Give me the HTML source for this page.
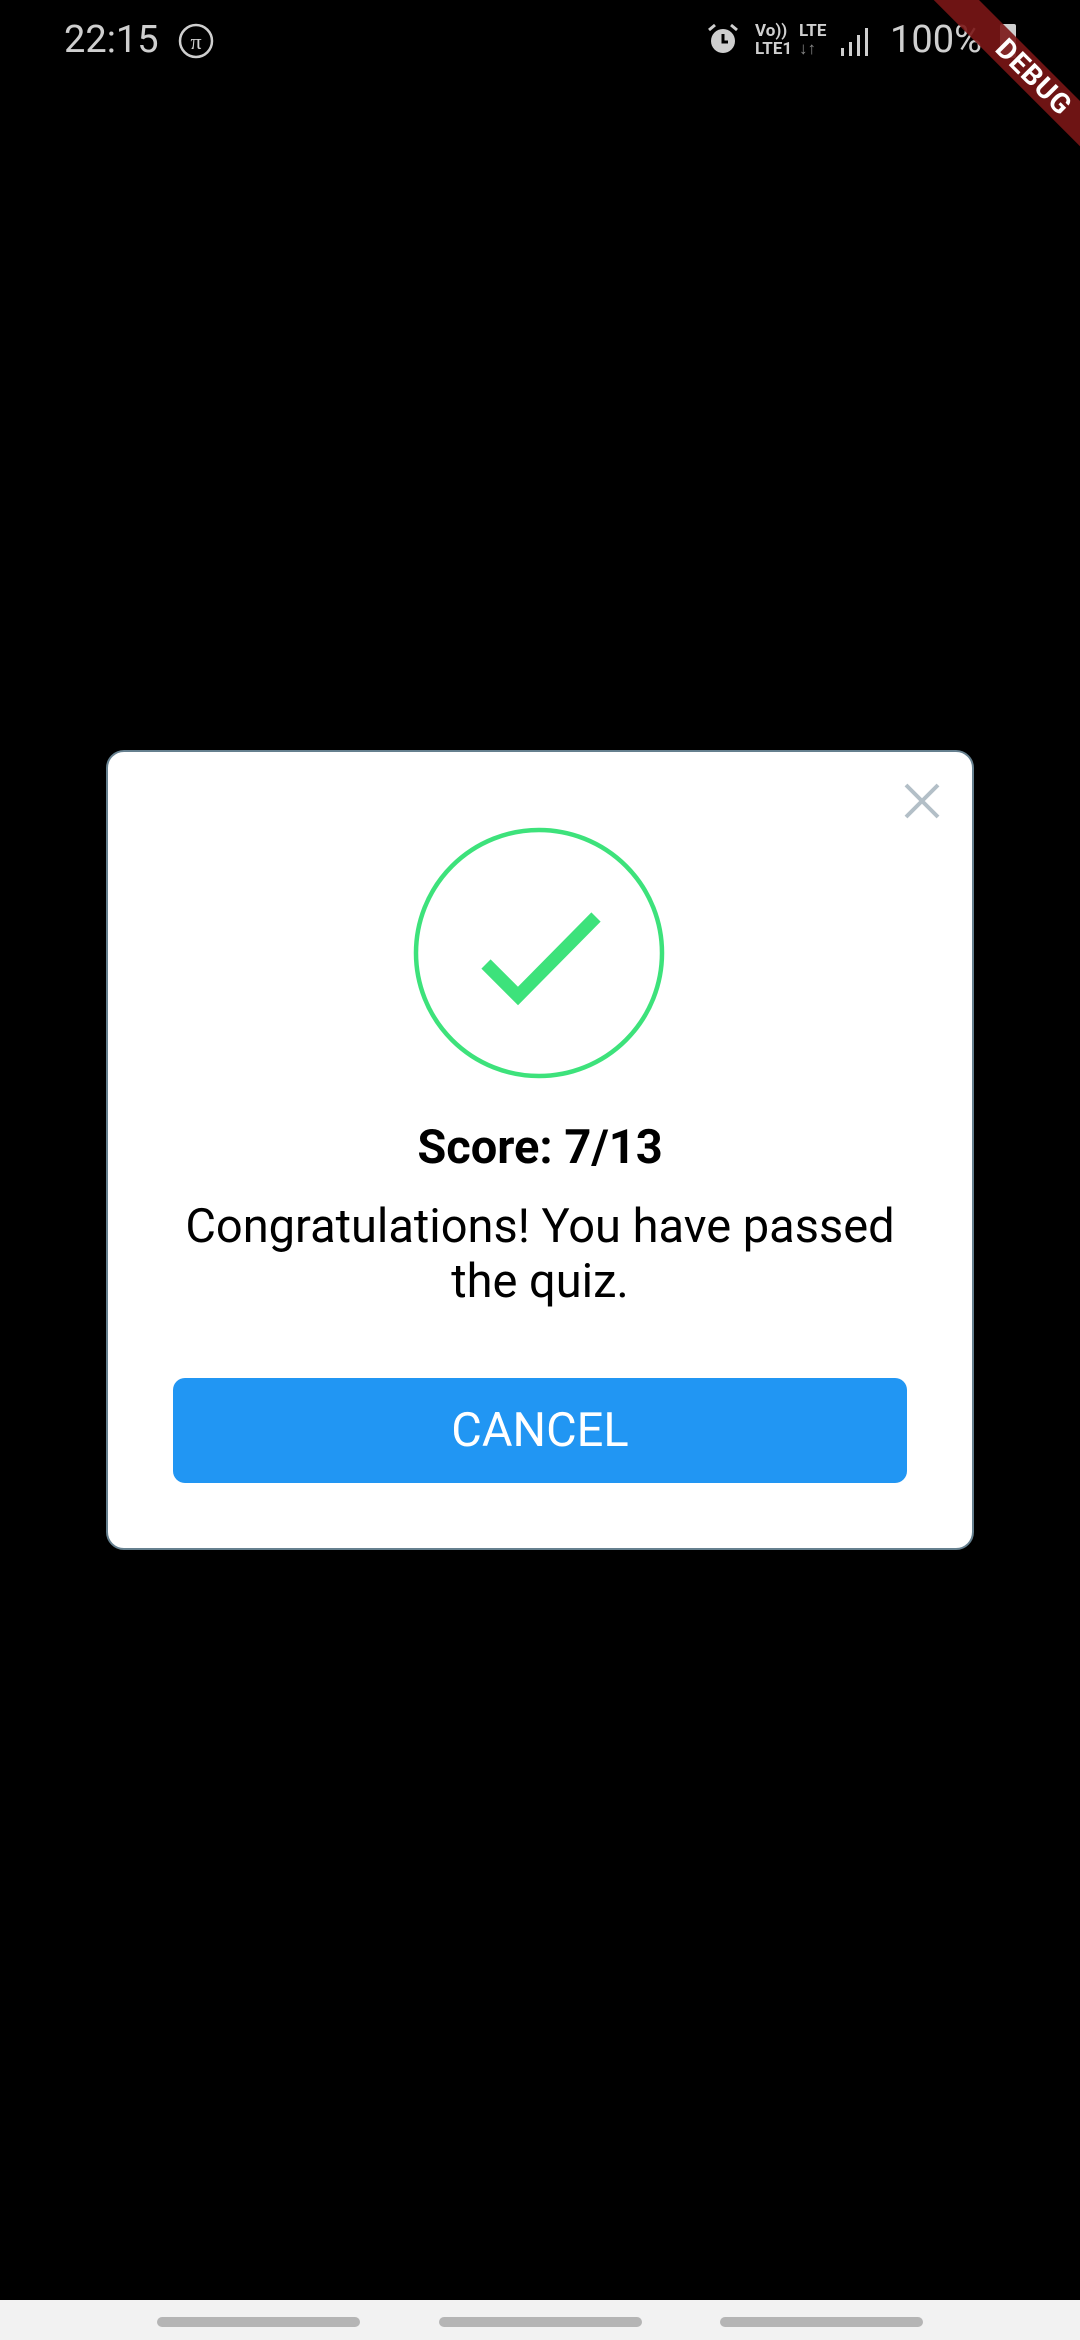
<!DOCTYPE html>
<html><head><meta charset="utf-8"><style>
html,body{margin:0;padding:0;background:#000;width:1080px;height:2340px;overflow:hidden;position:relative;font-family:"Roboto","Liberation Sans",sans-serif}
.abs{position:absolute}
.sb{color:#cfcfcf}
.dlg{left:106px;top:750px;width:864px;height:796px;background:#fff;border:2px solid #66808f;border-radius:18px}
.btn{left:173px;top:1378px;width:734px;height:105px;background:#2196F3;border-radius:12px;color:#fff;font-size:47px;text-align:center;line-height:105px}
.nav{left:0;top:2300px;width:1080px;height:40px;background:#f2f2f2}
.pill{top:2317px;width:203px;height:10px;border-radius:5px;background:#b5b5b5}
</style></head><body>
<div class="abs sb" style="left:64px;top:18px;font-size:38px;">22:15</div>
<svg class="abs" style="left:177px;top:22px" width="38" height="38" viewBox="0 0 38 38"><circle cx="19" cy="19" r="16" fill="none" stroke="#cfcfcf" stroke-width="2.5"/><text x="19" y="27" text-anchor="middle" font-size="22" fill="#cfcfcf" font-family="Liberation Serif">π</text></svg>
<svg class="abs" style="left:706px;top:22px" width="34" height="36" viewBox="0 0 34 36"><circle cx="17" cy="19" r="12" fill="#cfcfcf"/><path d="M17 12v8h5" stroke="#000" stroke-width="3" fill="none"/><path d="M3 8l6-5M31 8l-6-5" stroke="#cfcfcf" stroke-width="3"/></svg>
<div class="abs sb" style="left:755px;top:22px;font-size:17px;line-height:18px;font-weight:bold">Vo))<br>LTE1</div>
<div class="abs sb" style="left:799px;top:22px;font-size:17px;line-height:18px;font-weight:bold">LTE<br><span style="color:#888">↓↑</span></div>
<svg class="abs" style="left:840px;top:26px" width="30" height="32"><rect x="1" y="22" width="3" height="8" fill="#cfcfcf"/><rect x="9" y="16" width="3" height="14" fill="#cfcfcf"/><rect x="17" y="9" width="3" height="21" fill="#cfcfcf"/><rect x="25" y="2" width="3" height="28" fill="#cfcfcf"/></svg>
<div class="abs sb" style="left:890px;top:18px;font-size:38px;">100%</div>
<div class="abs" style="left:1000px;top:24px;width:16px;height:34px;background:#cfcfcf;border-radius:2px"></div>
<div class="abs" style="left:955px;top:-24px;width:260px;height:32px;background:rgba(122,22,22,0.9);transform:rotate(45deg);transform-origin:0 0;color:#fff;font-weight:bold;font-size:28px;line-height:32px;letter-spacing:1px;padding-left:80px;box-sizing:border-box">DEBUG</div>

<div class="abs dlg"></div>
<svg class="abs" style="left:900px;top:779px" width="44" height="44" viewBox="0 0 44 44"><path d="M6 6L38 38M38 6L6 38" stroke="#b3bfc7" stroke-width="4"/></svg>
<svg class="abs" style="left:410px;top:824px" width="260" height="260" viewBox="0 0 260 260"><circle cx="129" cy="129" r="123" fill="none" stroke="#3de27b" stroke-width="4.5"/><path d="M76 140L108 172L186 93" fill="none" stroke="#3de27b" stroke-width="13"/></svg>
<div class="abs" style="left:106px;width:868px;top:1120px;text-align:center;font-size:47px;font-weight:bold;color:#000">Score: 7/13</div>
<div class="abs" style="left:106px;width:868px;top:1199px;text-align:center;font-size:47px;line-height:55px;color:#000">Congratulations! You have passed<br>the quiz.</div>
<div class="abs btn">CANCEL</div>

<div class="abs nav"></div>
<div class="abs pill" style="left:157px"></div>
<div class="abs pill" style="left:439px"></div>
<div class="abs pill" style="left:720px"></div>
</body></html>
